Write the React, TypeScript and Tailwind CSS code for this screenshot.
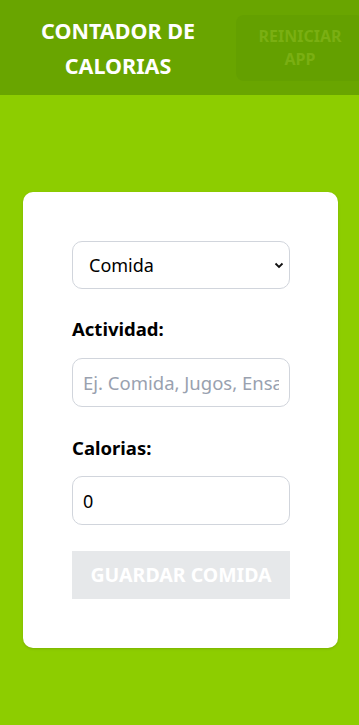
import { useState } from 'react';

export default function App() {
  const [tipo, setTipo] = useState('comida');
  const [actividad, setActividad] = useState('');
  const [calorias, setCalorias] = useState(0);

  const valido = actividad.trim() !== '' && calorias > 0;

  return (
    <div className="min-h-screen w-full overflow-x-hidden bg-[#8dcd00] font-['Noto_Sans','Open_Sans',sans-serif]">
      {/* Header */}
      <header className="flex h-[95px] items-center bg-[#69a500]">
        <div className="w-[236px] shrink-0 text-center">
          <h1 className="text-[21.5px] font-bold uppercase leading-[35px] text-white">
            Contador de
            <br />
            Calorias
          </h1>
        </div>
        <button
          disabled
          className="h-[66px] w-[128px] shrink-0 rounded-lg bg-[#64a000] text-[16px] font-bold uppercase leading-[23px] text-[#7aaf12]"
        >
          Reiniciar
          <br />
          App
        </button>
      </header>

      <main className="pl-[23px] pr-[21px] pt-[97px]">
        <form className="rounded-[10px] bg-white pb-[49px] pl-[49px] pr-12 pt-[49px] shadow-sm">
          {/* Tipo */}
          <div className="relative">
            <select
              value={tipo}
              onChange={(e) => setTipo(e.target.value)}
              className="h-12 w-full appearance-none rounded-[10px] border border-gray-300 bg-white pl-4 text-[18px] text-black outline-none"
            >
              <option value="comida">Comida</option>
              <option value="ejercicio">Ejercicio</option>
            </select>
            <svg
              className="pointer-events-none absolute right-[5px] top-1/2 h-3 w-3 -translate-y-1/2"
              viewBox="0 0 12 12"
              fill="none"
              stroke="#111"
              strokeWidth="1.8"
            >
              <path d="M2.5 4.5 6 8l3.5-3.5" />
            </svg>
          </div>

          {/* Actividad */}
          <label htmlFor="actividad" className="mt-[26px] block text-[18.5px] font-bold leading-7 text-black">
            Actividad:
          </label>
          <input
            id="actividad"
            type="text"
            value={actividad}
            onChange={(e) => setActividad(e.target.value)}
            placeholder="Ej. Comida, Jugos, Ensalada, Ejercicio, Pesas o Bicicleta"
            className="mt-[15px] h-[49px] w-full rounded-[10px] border border-gray-300 px-2.5 text-[18.5px] text-black outline-none placeholder:text-gray-400"
          />

          {/* Calorias */}
          <label htmlFor="calorias" className="mt-[27px] block text-[18.5px] font-bold leading-7 text-black">
            Calorias:
          </label>
          <input
            id="calorias"
            type="number"
            value={calorias}
            onChange={(e) => setCalorias(+e.target.value)}
            className="mt-[14px] h-[49px] w-full rounded-[10px] border border-gray-300 px-2.5 text-[18px] text-black outline-none"
          />

          <button
            type="submit"
            disabled={!valido}
            className="mt-[26px] h-12 w-full bg-[#e6e8ea] text-[19.5px] font-bold uppercase text-white"
          >
            Guardar Comida
          </button>
        </form>
      </main>
    </div>
  );
}
